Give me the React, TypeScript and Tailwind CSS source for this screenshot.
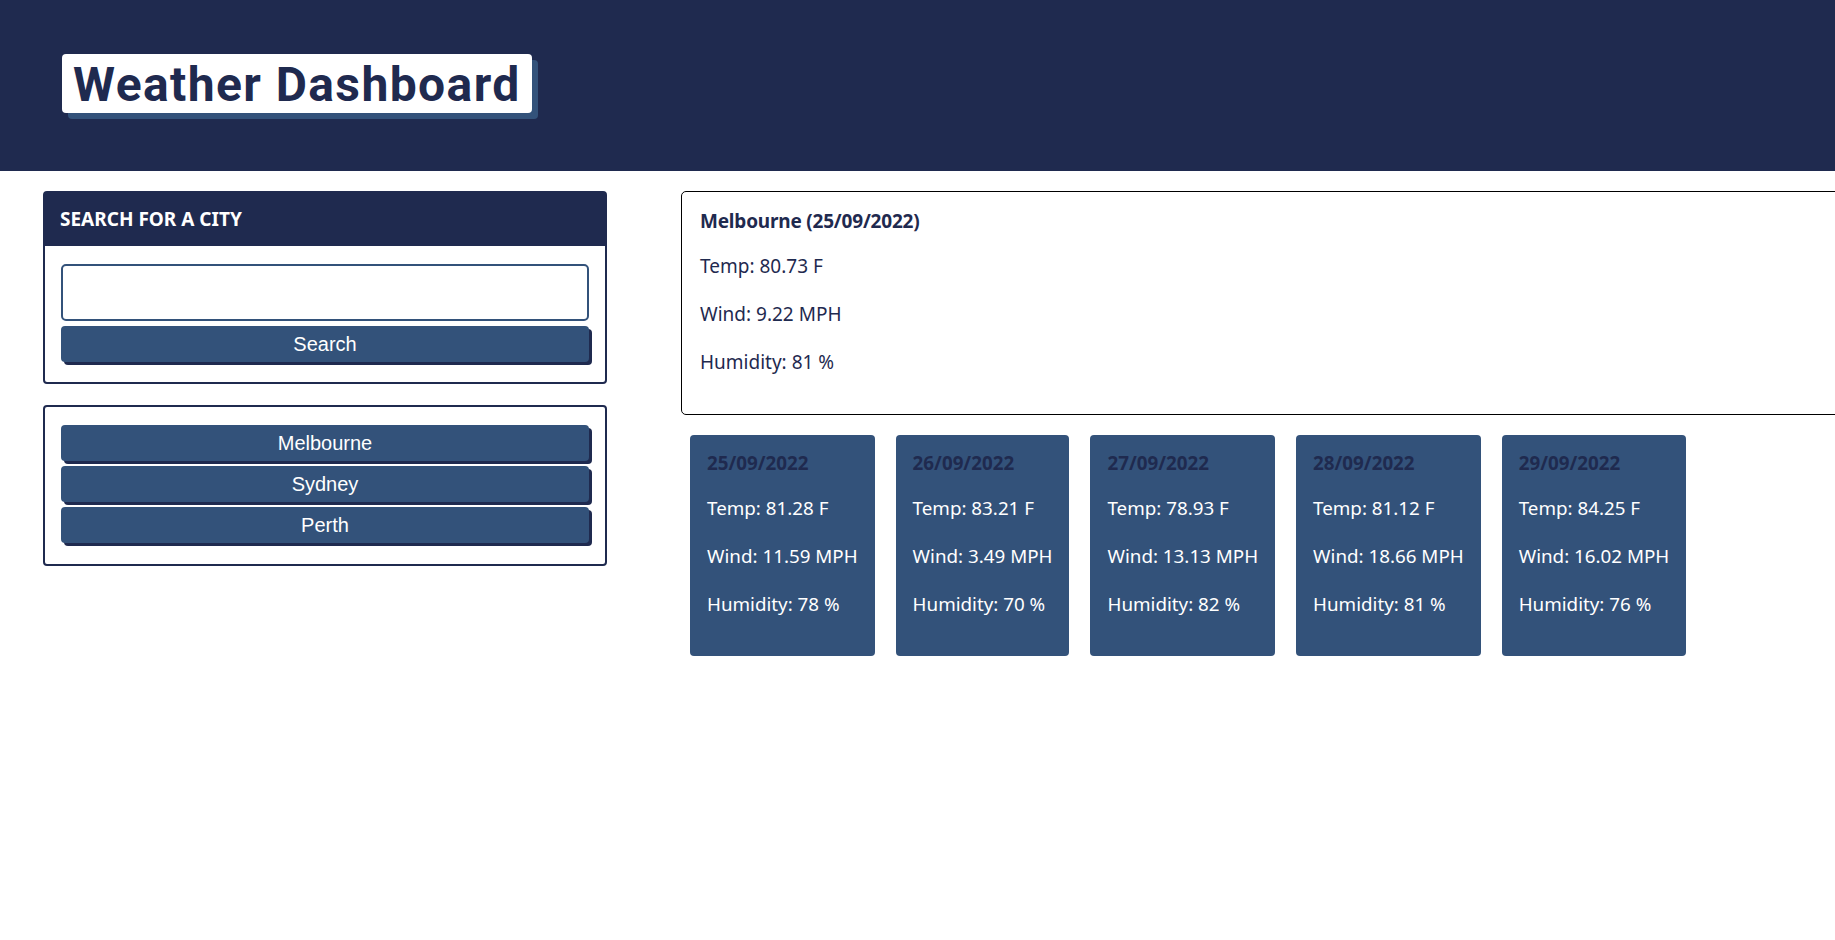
const forecast = [
  { date: "25/09/2022", temp: "81.28", wind: "11.59", humidity: "78" },
  { date: "26/09/2022", temp: "83.21", wind: "3.49", humidity: "70" },
  { date: "27/09/2022", temp: "78.93", wind: "13.13", humidity: "82" },
  { date: "28/09/2022", temp: "81.12", wind: "18.66", humidity: "81" },
  { date: "29/09/2022", temp: "84.25", wind: "16.02", humidity: "76" },
]

const cities = ["Melbourne", "Sydney", "Perth"]

const CityButton = ({ label }: { label: string }) => {
  return (
    <button className="block w-full h-[36px] rounded-[4px] bg-[#33527a] text-white text-[20px] font-['Liberation_Sans',Arial,sans-serif] shadow-[3px_3px_0_#1f2a4f]">
      {label}
    </button>
  )
}

const App = () => {
  return (
    <div className="min-h-screen w-full overflow-hidden bg-white font-['Noto_Sans',sans-serif] text-[19px] text-[#1f2a4f]">
      <header className="bg-[#1f2a4f] pt-[54px] pb-[58px] pl-[62px]">
        <h1 className="inline-block rounded-[4px] bg-white px-[11px] pt-[2px] text-[48px] leading-[57px] tracking-[1.4px] font-bold font-['Roboto',sans-serif] text-[#1f2a4f] shadow-[6px_6px_0_#33527a]">
          Weather Dashboard
        </h1>
      </header>

      <main className="flex pt-[20px] pl-[43px]">
        {/* left column */}
        <aside className="w-[564px] shrink-0 flex flex-col gap-[21px]">
          <section className="rounded-[4px] border-2 border-[#1f2a4f]">
            <h2 className="bg-[#1f2a4f] h-[53px] flex items-center px-[15px] text-white font-bold uppercase text-[19px]">
              Search for a city
            </h2>
            <div className="px-[16px] pt-[18px] pb-[20px] flex flex-col gap-[5px]">
              <input
                type="text"
                className="h-[57px] w-full rounded-[5px] border-2 border-[#33527a] outline-none px-3"
              />
              <CityButton label="Search" />
            </div>
          </section>

          <section className="rounded-[4px] border-2 border-[#1f2a4f] px-[16px] pt-[18px] pb-[21px] flex flex-col gap-[5px]">
            {cities.map((c) => (
              <CityButton key={c} label={c} />
            ))}
          </section>
        </aside>

        {/* right column */}
        <div className="ml-[74px] w-[1300px] shrink-0">
          <section className="rounded-[5px] border border-black pl-[18px] pt-[15px] pb-[18px]">
            <h3 className="font-bold leading-[29px] mb-[16px] tracking-[-0.2px]">Melbourne (25/09/2022)</h3>
            <p className="leading-[29px] mb-[19px]">Temp: 80.73 F</p>
            <p className="leading-[29px] mb-[19px]">Wind: 9.22 MPH</p>
            <p className="leading-[29px] mb-[19px]">Humidity: 81 %</p>
          </section>

          <div className="flex gap-[21px] mt-[20px] ml-[9px]">
            {forecast.map((d) => (
              <div key={d.date} className="rounded-[4px] bg-[#33527a] px-[17px] pt-[14px] pb-[18px] text-[18.8px] text-white">
                <h4 className="font-bold text-[#1f2a4f] leading-[29px] mb-[16px]">{d.date}</h4>
                <p className="leading-[29px] mb-[19px]">Temp: {d.temp} F</p>
                <p className="leading-[29px] mb-[19px]">Wind: {d.wind} MPH</p>
                <p className="leading-[29px] mb-[19px]">Humidity: {d.humidity} %</p>
              </div>
            ))}
          </div>
        </div>
      </main>
    </div>
  )
}

export default App
